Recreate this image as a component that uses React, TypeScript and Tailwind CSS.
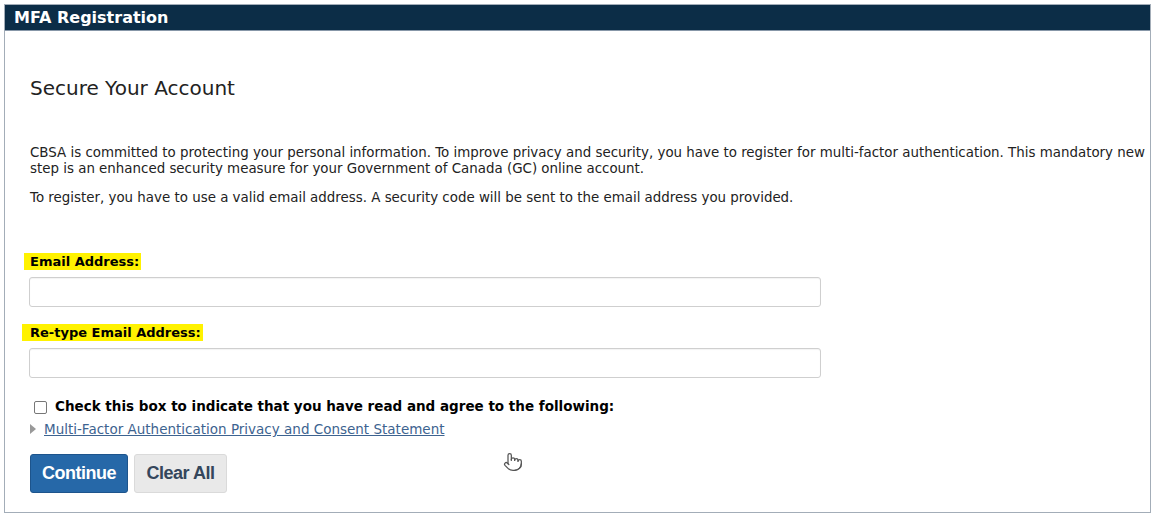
import React from 'react';
import { Pointer } from 'lucide-react';

const font = "font-['DejaVu_Sans',Verdana,sans-serif]";

const App = () => {
    return (
        <div className={`min-h-screen bg-white pt-[4px] pl-[4px] text-[#222] ${font}`}>
            <div className="relative w-[1147px] border border-[#a3adb8] bg-white">
                {/* header bar */}
                <div className="h-[26px] bg-[#0c2d47] border-b border-[#8797a8] pl-[9px] flex items-center">
                    <span className="text-white font-bold text-[16px] leading-none">MFA Registration</span>
                </div>

                <div className="pl-[25px] pb-[19px]">
                    <h1 className="mt-[45px] text-[20px] leading-[24px] text-[#222]">Secure Your Account</h1>

                    <p className="mt-[45px] text-[13.4px] leading-[16px] w-[1118px]">
                        CBSA is committed to protecting your personal information. To improve privacy and security, you have to register for multi-factor authentication. This mandatory new step is an enhanced security measure for your Government of Canada (GC) online account.
                    </p>
                    <p className="mt-[13px] text-[13.4px] leading-[16px]">
                        To register, you have to use a valid email address. A security code will be sent to the email address you provided.
                    </p>

                    <div className="mt-[47px] h-[17px] leading-[17px] text-[13px]">
                        <label className="inline-block ml-[-6px] pl-[6px] pr-[2px] bg-[#fff200] text-[13px] leading-[17px] font-bold text-black">Email Address:</label>
                    </div>
                    <input type="email" className="block mt-[7px] ml-[-1px] w-[792px] h-[30px] rounded-[3px] border border-[#cfcfcf] bg-white shadow-[inset_0_1px_1px_rgba(0,0,0,0.05)]" />

                    <div className="mt-[17px] h-[17px] leading-[17px] text-[13px]">
                        <label className="inline-block ml-[-8px] pl-[8px] pr-[2px] bg-[#fff200] text-[13px] leading-[17px] font-bold text-black">Re-type Email Address:</label>
                    </div>
                    <input type="email" className="block mt-[7px] ml-[-1px] w-[792px] h-[30px] rounded-[3px] border border-[#cfcfcf] bg-white shadow-[inset_0_1px_1px_rgba(0,0,0,0.05)]" />

                    <div className="mt-[20px] flex items-center h-[16px]">
                        <span className="ml-[4px] w-[13px] h-[13px] mt-[3px] rounded-[2px] border border-[#777] bg-white"></span>
                        <span className="ml-[8px] text-[13.5px] font-bold text-black leading-[16px]">Check this box to indicate that you have read and agree to the following:</span>
                    </div>

                    <div className="mt-[7px] flex items-center h-[16px]">
                        <span className="w-0 h-0 border-y-[5px] border-y-transparent border-l-[6px] border-l-[#999]"></span>
                        <a href="#" className="ml-[8px] text-[13.5px] leading-[16px] text-[#3d6390] underline">Multi-Factor Authentication Privacy and Consent Statement</a>
                    </div>

                    <div className="mt-[17px] flex gap-[6px]">
                        <button className="w-[98px] h-[39px] rounded-[3px] bg-[#2668a8] border border-[#1d548c] text-white font-bold text-[18px] tracking-[-0.5px] font-['Liberation_Sans',Arial,sans-serif]">Continue</button>
                        <button className="w-[93px] h-[39px] rounded-[3px] bg-[#e9e9e9] border border-[#dadada] text-[#34465c] font-bold text-[18px] tracking-[-0.5px] font-['Liberation_Sans',Arial,sans-serif]">Clear All</button>
                    </div>
                </div>

                {/* mouse cursor */}
                <div className="absolute left-[498px] top-[447px] text-[#555]">
                    <Pointer size={20} strokeWidth={1.5} />
                </div>
            </div>
        </div>
    );
};

export default App;
